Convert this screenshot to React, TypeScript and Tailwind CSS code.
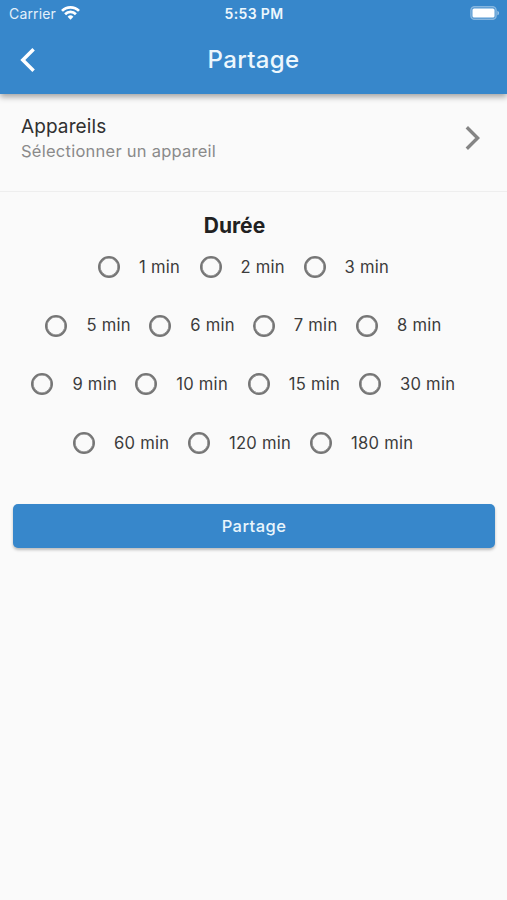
import React from "react";

type Option = { label: string; width: string };

const rows: { inset: string; options: Option[] }[] = [
  {
    inset: "pl-[98px]",
    options: [
      { label: "1 min", width: "w-[101.5px]" },
      { label: "2 min", width: "w-[104px]" },
      { label: "3 min", width: "w-[100px]" },
    ],
  },
  {
    inset: "pl-[45.4px]",
    options: [
      { label: "5 min", width: "w-[103.8px]" },
      { label: "6 min", width: "w-[103.6px]" },
      { label: "7 min", width: "w-[103.2px]" },
      { label: "8 min", width: "w-[100px]" },
    ],
  },
  {
    inset: "pl-[31.4px]",
    options: [
      { label: "9 min", width: "w-[103.8px]" },
      { label: "10 min", width: "w-[112.6px]" },
      { label: "15 min", width: "w-[111.2px]" },
      { label: "30 min", width: "w-[100px]" },
    ],
  },
  {
    inset: "pl-[73px]",
    options: [
      { label: "60 min", width: "w-[115px]" },
      { label: "120 min", width: "w-[122px]" },
      { label: "180 min", width: "w-[120px]" },
    ],
  },
];

function StatusBar() {
  return (
    <div className="grid h-[27px] grid-cols-3 items-center pl-[9px] pr-[7px] leading-none">
      <div className="flex items-center gap-[5px]">
        <span className="text-[14px] tracking-[0.15px] text-[#e3f0fa]">Carrier</span>
        <svg className="-mt-[2px]" width="19" height="14" viewBox="0 0 19 14" fill="none" stroke="white" strokeWidth="2.7">
          <path d="M1 4.9a12 12 0 0 1 17 0" />
          <path d="M4.1 8.2a7.6 7.6 0 0 1 10.8 0" />
          <path d="M9.5 13.7L6.6 10.8a4.1 4.1 0 0 1 5.8 0z" fill="white" stroke="none" />
        </svg>
      </div>
      <span className="-ml-[1px] text-center text-[14px] font-semibold tracking-[0.35px] text-[#edf7fd]">5:53 PM</span>
      <svg className="-mt-[1px] justify-self-end" width="30" height="14" viewBox="0 0 30 14">
        <rect x="0.8" y="0.6" width="25.4" height="12.8" rx="3.6" fill="white" fillOpacity="0.15" stroke="white" strokeOpacity="0.35" strokeWidth="1.3" />
        <rect x="2.5" y="2.4" width="22" height="9.2" rx="1.6" fill="white" />
        <path d="M27.4 4.7c2.2.8 2.2 3.8 0 4.6z" fill="white" fillOpacity="0.5" />
      </svg>
    </div>
  );
}

export default function App() {
  return (
    <div className="flex h-[900px] w-[507px] flex-col overflow-hidden bg-[#fafafa] font-['Inter','Liberation_Sans',sans-serif] text-[#212121]">
      <header className="relative h-[94px] shrink-0 bg-[#3787cb] text-white shadow-[0_3px_6px_rgba(0,0,0,0.35)]">
        <StatusBar />
        <div className="grid h-[66px] grid-cols-[60px_1fr_60px] items-center">
          <svg className="ml-[20px]" width="16" height="26" viewBox="0 0 16 26" fill="none" stroke="white" strokeWidth="3.5">
            <path d="M13.6 2.2L2.8 13l10.8 10.8" />
          </svg>
          <h1 className="text-center text-[24px] font-medium leading-none tracking-[0.35px] text-[#edf7fd]">Partage</h1>
        </div>
      </header>

      <button className="flex h-[97.5px] shrink-0 items-start justify-between border-b border-[#eeeeee] pl-[21px] pr-[26px] pt-[20px] text-left">
        <span className="flex flex-col">
          <span className="text-[19px] leading-[25px] tracking-[0.1px] text-[#303030]">Appareils</span>
          <span className="text-[16.5px] leading-[25px] tracking-[0.25px] text-[#8a8a8a]">Sélectionner un appareil</span>
        </span>
        <svg className="mt-[11px]" width="16" height="26" viewBox="0 0 16 26" fill="none" stroke="#858585" strokeWidth="3.4">
          <path d="M1.8 2.2L12.6 13 1.8 23.8" />
        </svg>
      </button>

      <main>
        <h2 className="mr-[38px] pt-[20px] text-center text-[21px] font-bold leading-[27px]">Durée</h2>
        <div className="-mt-[1px]">
          {rows.map((row) => (
            <div key={row.options[0].label} className={`flex h-[58.7px] items-center ${row.inset}`}>
              {row.options.map((option) => (
                <label key={option.label} className={`flex shrink-0 items-center gap-[19px] ${option.width}`}>
                  <input
                    type="radio"
                    name="duration"
                    className="m-0 size-[22px] shrink-0 appearance-none rounded-full border-2 border-[#757575] shadow-[inset_0_0_0_0.6px_#757575]"
                  />
                  <span className="whitespace-nowrap text-[16.6px] leading-none tracking-[0.25px] text-[#3c3c3c]">{option.label}</span>
                </label>
              ))}
            </div>
          ))}
        </div>
        <button className="mx-[13px] mt-[32px] flex h-[44px] w-[482px] items-center justify-center rounded-[5px] bg-[#3787cb] text-[16.5px] font-medium tracking-[0.45px] text-[#e9f5fc] shadow-[0_2px_3px_rgba(0,0,0,0.25)]">
          Partage
        </button>
      </main>
    </div>
  );
}
